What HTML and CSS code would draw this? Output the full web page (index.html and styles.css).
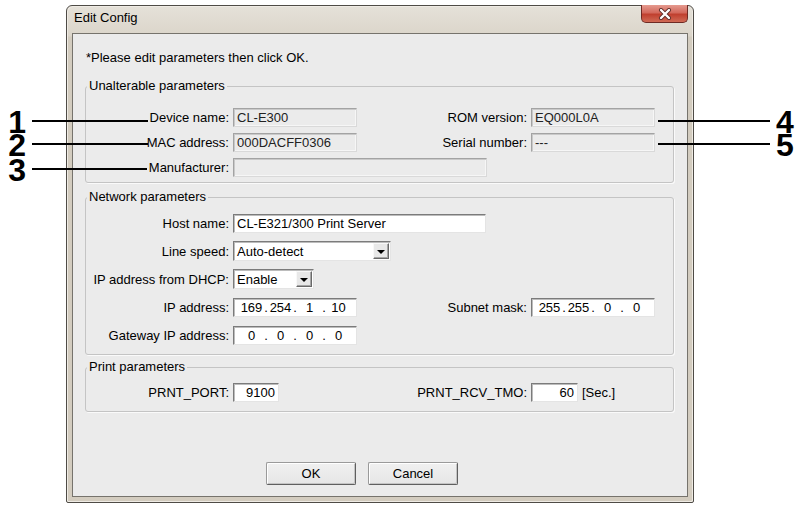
FILE: index.html
```html
<!DOCTYPE html>
<html lang="en">
<head>
    <meta charset="UTF-8">
    <title>Edit Config</title>
    <link rel="stylesheet" href="styles.css">
</head>
<body>
    <div class="figure">
        <div class="window">
            <div class="titlebar">
                <span class="title">Edit Config</span>
                <button class="close" aria-label="Close">
                    <svg width="14" height="12" viewBox="0 0 14 12">
                        <path d="M3 2 L11 10 M11 2 L3 10" stroke="#5a2a26" stroke-width="4" stroke-linecap="round"/>
                        <path d="M3 2 L11 10 M11 2 L3 10" stroke="#fff" stroke-width="2.4" stroke-linecap="round"/>
                    </svg>
                </button>
            </div>

            <div class="client">
                <p class="intro">*Please edit parameters then click OK.</p>

                <fieldset class="group fixed">
                    <legend>Unalterable parameters</legend>
                    <div class="row">
                        <label class="lbl">Device name:</label>
                        <input class="edit ro" value="CL-E300" readonly>
                        <label class="lbl">ROM version:</label>
                        <input class="edit ro" value="EQ000L0A" readonly>
                    </div>
                    <div class="row">
                        <label class="lbl">MAC address:</label>
                        <input class="edit ro" value="000DACFF0306" readonly>
                        <label class="lbl">Serial number:</label>
                        <input class="edit ro" value="---" readonly>
                    </div>
                    <div class="row">
                        <label class="lbl">Manufacturer:</label>
                        <input class="edit ro wide" value="" readonly>
                    </div>
                </fieldset>

                <fieldset class="group network">
                    <legend>Network parameters</legend>
                    <div class="row">
                        <label class="lbl">Host name:</label>
                        <input class="edit wide host" value="CL-E321/300 Print Server">
                    </div>
                    <div class="row">
                        <label class="lbl">Line speed:</label>
                        <div class="combo speed">
                            <span class="combo-text">Auto-detect</span>
                            <span class="combo-btn"><span class="arrow"></span></span>
                        </div>
                    </div>
                    <div class="row">
                        <label class="lbl">IP address from DHCP:</label>
                        <div class="combo dhcp">
                            <span class="combo-text">Enable</span>
                            <span class="combo-btn"><span class="arrow"></span></span>
                        </div>
                    </div>
                    <div class="row">
                        <label class="lbl">IP address:</label>
                        <div class="ipbox">
                            <span class="oct">169</span><span class="dot">.</span><span class="oct">254</span><span class="dot">.</span><span class="oct">1</span><span class="dot">.</span><span class="oct">10</span>
                        </div>
                        <label class="lbl">Subnet mask:</label>
                        <div class="ipbox">
                            <span class="oct">255</span><span class="dot">.</span><span class="oct">255</span><span class="dot">.</span><span class="oct">0</span><span class="dot">.</span><span class="oct">0</span>
                        </div>
                    </div>
                    <div class="row">
                        <label class="lbl">Gateway IP address:</label>
                        <div class="ipbox">
                            <span class="oct">0</span><span class="dot">.</span><span class="oct">0</span><span class="dot">.</span><span class="oct">0</span><span class="dot">.</span><span class="oct">0</span>
                        </div>
                    </div>
                </fieldset>

                <fieldset class="group print">
                    <legend>Print parameters</legend>
                    <div class="row">
                        <label class="lbl">PRNT_PORT:</label>
                        <input class="edit digits port" value="9100">
                        <label class="lbl">PRNT_RCV_TMO:</label>
                        <div class="unit">
                            <input class="edit digits tmo" value="60">
                            <span>[Sec.]</span>
                        </div>
                    </div>
                </fieldset>

                <div class="actions">
                    <button class="btn">OK</button>
                    <button class="btn">Cancel</button>
                </div>
            </div>
        </div>

        <!-- callouts drawn over the screenshot -->
        <div class="callout left c1"><span class="mark">1</span><span class="lead"></span></div>
        <div class="callout left c2"><span class="mark">2</span><span class="lead"></span></div>
        <div class="callout left c3"><span class="mark">3</span><span class="lead short"></span></div>
        <div class="callout right c4"><span class="lead"></span><span class="mark">4</span></div>
        <div class="callout right c5"><span class="lead"></span><span class="mark">5</span></div>
    </div>
</body>
</html>
```

FILE: styles.css
```css
body {
    margin: 0;
    background-color: #fff;
    font-family: 'Liberation Sans', Arial, sans-serif;
    font-size: 13px;
    color: #000;
}
.figure {
    position: relative;
    width: 801px;
    height: 507px;
    overflow: hidden;
    padding: 5px 0 0 66px;
    box-sizing: border-box;
}
.window {
    width: 628px;
    height: 498px;
    box-sizing: border-box;
    border: 1px solid #4e4b46;
    border-radius: 6px 6px 2px 2px;
    background: linear-gradient(#e5e1d9, #dbd5ca 30px, #d3ccbf 31px, #d3ccbf);
    box-shadow: inset 1px 1px 0 #efebe4, inset -1px -1px 0 #efebe4;
    padding: 0 5px 5px 5px;
}
.titlebar {
    height: 27px;
    display: flex;
    justify-content: space-between;
    align-items: flex-start;
}
.title {
    margin-top: 4px;
    padding-left: 2px;
    line-height: 15px;
}
.close {
    margin-top: -1px;
    width: 47px;
    height: 18px;
    padding: 0;
    border: 1px solid #6e2a24;
    border-top: none;
    border-radius: 0 0 5px 5px;
    background: linear-gradient(#e59a8f, #d3695c 45%, #c0402f 55%, #d06a55);
    display: flex;
    align-items: center;
    justify-content: center;
}
.client {
    height: 464px;
    box-sizing: border-box;
    border: 1px solid #76736c;
    background-color: #ebebeb;
    padding: 17px 13px 0 12px;
}
.intro {
    margin: 0;
    padding-left: 1px;
    line-height: 14px;
}
.group {
    margin: 14px 0 0 0;
    border: 1px solid #c4c4c4;
    border-radius: 3px;
    box-shadow: 1px 1px 0 #fafafa;
    padding: 0;
    min-width: 0;
    display: flex;
    flex-direction: column;
}
.group legend {
    margin-left: 1px;
    padding: 0 2px;
    line-height: 14px;
}
.fixed {
    padding: 15px 0 5px 0;
    gap: 6px;
}
.network {
    margin-top: 7px;
    padding: 9px 0 9px 0;
    gap: 8px;
}
.print {
    margin-top: 5px;
    padding: 8px 0 9px 0;
}
.row {
    display: grid;
    grid-template-columns: 147px 124px 174px 124px;
    align-items: center;
    height: 20px;
}
.fixed .row {
    height: 19px;
}
.lbl {
    text-align: right;
    padding-right: 4px;
    white-space: nowrap;
}
.edit {
    box-sizing: border-box;
    width: 124px;
    height: 19px;
    margin: 0;
    padding: 0 2px 0 3px;
    font: 13px 'Liberation Sans', Arial, sans-serif;
    color: #000;
    background-color: #fff;
    border: 1px solid;
    border-color: #7b7b7b #e4e4e4 #e4e4e4 #7b7b7b;
    box-shadow: inset 1px 1px 0 #bcbcbc;
    outline: none;
}
.edit.ro {
    background-color: #ebebeb;
    color: #222;
    border-color: #a3a3a3 #d9d9d9 #d9d9d9 #a3a3a3;
    box-shadow: inset 1px 1px 0 #c9c9c9, inset -1px -1px 0 #f6f6f6;
}
.edit.wide {
    grid-column: span 2;
    width: 254px;
}
.edit.host {
    width: 253px;
}
.edit.digits {
    text-align: right;
    padding-right: 3px;
}
.edit.port {
    width: 46px;
}
.edit.tmo {
    width: 47px;
}
.unit {
    display: flex;
    align-items: center;
    gap: 4px;
    white-space: nowrap;
}
.combo {
    box-sizing: border-box;
    height: 20px;
    display: flex;
    background-color: #fff;
    border: 1px solid;
    border-color: #7b7b7b #e4e4e4 #e4e4e4 #7b7b7b;
    box-shadow: inset 1px 1px 0 #bcbcbc;
    padding: 1px;
}
.combo.speed {
    grid-column: span 2;
    width: 158px;
}
.combo.dhcp {
    width: 81px;
}
.combo-text {
    flex: 1;
    padding-left: 2px;
    line-height: 17px;
}
.combo-btn {
    width: 16px;
    box-sizing: border-box;
    background-color: #e8e8e8;
    border: 1px solid;
    border-color: #f8f8f8 #696969 #696969 #f8f8f8;
    box-shadow: inset -1px -1px 0 #a6a6a6;
    display: flex;
    align-items: center;
    justify-content: center;
}
.arrow {
    width: 0;
    height: 0;
    border-left: 4px solid transparent;
    border-right: 4px solid transparent;
    border-top: 4px solid #000;
    margin-top: 1px;
}
.ipbox {
    box-sizing: border-box;
    width: 124px;
    height: 19px;
    display: flex;
    align-items: center;
    padding-left: 6px;
    background-color: #fff;
    border: 1px solid;
    border-color: #7b7b7b #e4e4e4 #e4e4e4 #7b7b7b;
    box-shadow: inset 1px 1px 0 #bcbcbc;
}
.oct {
    width: 23px;
    text-align: center;
}
.dot {
    width: 6px;
    text-align: center;
}
.actions {
    display: flex;
    gap: 12px;
    margin-top: 50px;
    padding-left: 181px;
}
.btn {
    width: 90px;
    height: 23px;
    padding: 0;
    font: 13px 'Liberation Sans', Arial, sans-serif;
    color: #000;
    background: linear-gradient(#f0f0f0, #e6e6e6);
    border: 1px solid;
    border-color: #9a9a9a #5f5f5f #5f5f5f #9a9a9a;
    border-radius: 2px;
    box-shadow: inset 1px 1px 0 #fff, inset -1px -1px 0 #c4c4c4;
}
.callout {
    position: absolute;
    display: flex;
    align-items: flex-start;
    gap: 6px;
}
.mark {
    width: 21px;
    font-size: 32px;
    font-weight: bold;
    line-height: 23px;
}
.left .mark {
    text-align: right;
}
.lead {
    margin-top: 9px;
    height: 2px;
    background-color: #000;
}
.left .lead {
    width: 116px;
}
.left .lead.short {
    width: 115px;
}
.right .lead {
    width: 112px;
}
.left {
    left: 5px;
}
.right {
    left: 658px;
}
.c1, .c4 {
    top: 111px;
}
.c2, .c5 {
    top: 134px;
}
.c3 {
    top: 159px;
}
```
